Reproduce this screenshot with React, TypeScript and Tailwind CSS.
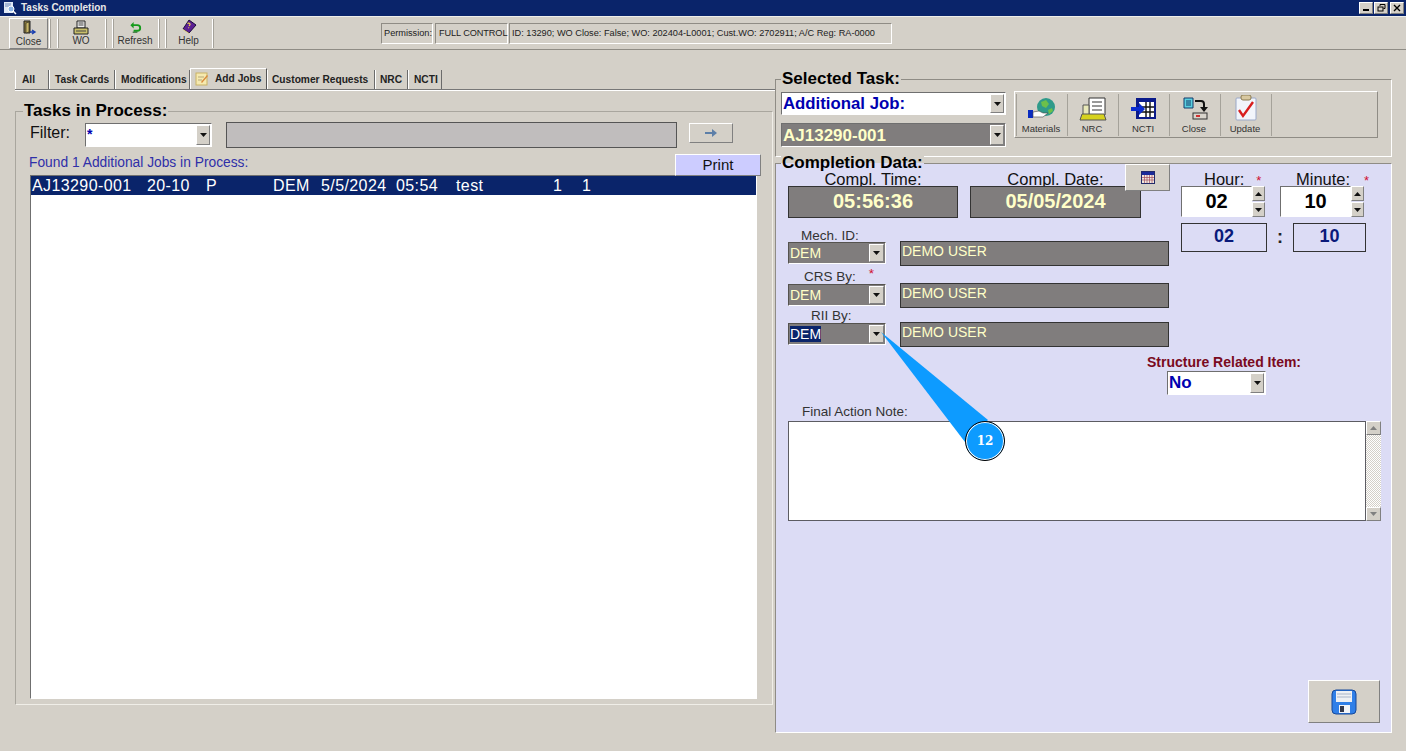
import type { ReactNode } from 'react'

const RAISED = 'border border-t-white border-l-white border-r-[#808080] border-b-[#808080]'
const SUNKEN = 'border border-t-[#6f6f6f] border-l-[#6f6f6f] border-r-white border-b-white'
const ETCHED = 'border border-t-[#8f8c85] border-l-[#8f8c85] border-r-white border-b-white'

function Arrow({ dim = false }: { dim?: boolean }) {
  return (
    <svg width="7" height="4" viewBox="0 0 7 4">
      <path d="M0 0h7L3.5 4z" fill={dim ? '#808080' : '#111'} />
    </svg>
  )
}

function DropButton({ className = 'w-[14px]' }: { className?: string }) {
  return (
    <div className={`${className} shrink-0 flex items-center justify-center bg-[#d4d0c8] ${RAISED}`}>
      <Arrow />
    </div>
  )
}

function SpinButtons() {
  return (
    <div className="w-[13px] h-[31px] flex flex-col gap-px">
      <div className={`h-[15px] flex items-center justify-center bg-[#d4d0c8] ${RAISED}`}>
        <svg width="7" height="4" viewBox="0 0 7 4">
          <path d="M0 4h7L3.5 0z" fill="#111" />
        </svg>
      </div>
      <div className={`h-[15px] flex items-center justify-center bg-[#d4d0c8] ${RAISED}`}>
        <Arrow />
      </div>
    </div>
  )
}

function ToolBtn({ label, icon, className = '' }: { label: string; icon: ReactNode; className?: string }) {
  return (
    <div className={`flex flex-col items-center shrink-0 text-[10px] leading-[12px] text-[#333] ${className}`}>
      <div className="h-[16px] flex items-center justify-center">{icon}</div>
      <span>{label}</span>
    </div>
  )
}

function Grip() {
  return <div className="w-[2px] h-[29px] shrink-0 border-l border-l-white border-r border-r-[#a5a29a]" />
}

function Tab({ label, className }: { label: string; className: string }) {
  return (
    <div className={`h-[19px] flex items-center shrink-0 border-r border-r-[#6b6b6b] border-l border-l-white text-[10.2px] font-bold text-[#222] whitespace-nowrap ${className}`}>
      {label}
    </div>
  )
}

function Mech({ value, selected = false, name }: { value: string; selected?: boolean; name: string }) {
  return (
    <div className="flex items-start">
      <div className="w-[98px] h-[22px] mt-px flex items-center justify-between pl-px pr-px bg-[#807d7d] border border-t-[#55534f] border-l-[#55534f] border-r-white border-b-white">
        <span className={`-mt-px text-[14px] leading-[16px] ${selected ? 'bg-[#0a246a] text-white' : 'text-[#ffffc8]'}`}>{value}</span>
        <DropButton className="w-[15px] h-[18px]" />
      </div>
      <div className="ml-[14px] w-[269px] h-[25px] border border-[#333] bg-[#807d7d] pl-px text-[14px] leading-[18px] text-[#ffffc8]">
        {name}
      </div>
    </div>
  )
}

const PanelLabel = 'text-[17px] leading-[18px] font-bold text-black bg-[#d4d0c8] w-fit px-px'

export default function App() {
  return (
    <div className="relative w-[1406px] h-[751px] overflow-hidden bg-[#d4d0c8] font-['Liberation_Sans',Arial,sans-serif]">
      {/* Title bar */}
      <div className="h-[16px] bg-[#0a246a] flex items-center pl-[3px] pr-[2px]">
        <svg width="14" height="14" viewBox="0 0 14 14">
          <rect x="1" y="1" width="9" height="11" fill="#dfe8f5" />
          <path d="M2 3h6M2 5h6" stroke="#6b86b8" />
          <circle cx="8" cy="8" r="3" fill="#8fb6e6" stroke="#fff" />
          <path d="M10 10l3 3" stroke="#fff" strokeWidth="1.5" />
        </svg>
        <span className="ml-[4px] text-[10px] leading-[16px] font-bold text-[#e8e8e8]">Tasks Completion</span>
        <div className="ml-auto flex">
          <div className={`w-[14px] h-[12px] bg-[#d4d0c8] flex items-end justify-center pb-[2px] ${RAISED}`}>
            <div className="w-[6px] h-[2px] bg-black" />
          </div>
          <div className={`ml-px w-[14px] h-[12px] bg-[#d4d0c8] flex items-center justify-center ${RAISED}`}>
            <svg width="9" height="8" viewBox="0 0 9 8" fill="none" stroke="#000">
              <path d="M3 2V.5h5v4H6.5" />
              <rect x="1" y="3" width="5" height="4" />
            </svg>
          </div>
          <div className={`ml-[2px] w-[14px] h-[12px] bg-[#d4d0c8] flex items-center justify-center ${RAISED}`}>
            <svg width="8" height="8" viewBox="0 0 8 8" stroke="#000" strokeWidth="1.4">
              <path d="M1 1l6 6M7 1L1 7" />
            </svg>
          </div>
        </div>
      </div>
      <div className="h-px bg-[#eeeeea]" />

      {/* Toolbar */}
      <div className="h-[33px] flex items-center border-b border-b-[#8f8c85]">
        <div className={`ml-[9px] w-[39px] h-[31px] pt-px shrink-0 ${RAISED}`}>
          <ToolBtn
            label="Close"
            icon={
              <svg width="16" height="16" viewBox="0 0 16 16">
                <path d="M3 1h6v12H3z" fill="#8a7a3c" stroke="#222" />
                <path d="M5 3l3-1v10l-3 1z" fill="#c9b765" stroke="#222" strokeWidth=".6" />
                <path d="M9 12h4m-2-2l3 2-3 2" stroke="#1a3fb0" strokeWidth="1.4" fill="none" />
              </svg>
            }
          />
        </div>
        <div className="ml-px">
          <Grip />
        </div>
        <div className="ml-[6px]">
          <Grip />
        </div>
        <ToolBtn
          label="WO"
          className="w-[46px] -ml-px"
          icon={
            <svg width="16" height="15" viewBox="0 0 16 15">
              <path d="M4 1h8v7H4z" fill="#eee" stroke="#222" />
              <path d="M5.5 3h5M5.5 5h5" stroke="#444" />
              <path d="M1 8h14v6H1z" fill="#c9bf6a" stroke="#222" />
              <path d="M3 11h10" stroke="#444" />
            </svg>
          }
        />
        <div className="ml-px">
          <Grip />
        </div>
        <div className="ml-[5px]">
          <Grip />
        </div>
        <ToolBtn
          label="Refresh"
          className="w-[44px] -ml-px"
          icon={
            <svg width="15" height="15" viewBox="0 0 16 16" fill="none">
              <path d="M4 5.5h6a3 3 0 010 6H6" stroke="#159a1c" strokeWidth="2" />
              <path d="M6 2L2.5 5.5 6 9z" fill="#159a1c" />
              <path d="M5 13h5" stroke="#0a5a10" />
            </svg>
          }
        />
        <div className="ml-px">
          <Grip />
        </div>
        <div className="ml-[5px]">
          <Grip />
        </div>
        <ToolBtn
          label="Help"
          className="w-[45px] -ml-px"
          icon={
            <svg width="16" height="16" viewBox="0 0 16 16">
              <path d="M8 1l7 5-7 8-6-4z" fill="#5b1f94" stroke="#1b0a3c" />
              <path d="M2 10l6 4 0 1-6-4z" fill="#e8d98a" />
              <path d="M6.5 4.5c1-1 3 0 2.5 1.2L8 7M7.4 8.6l.6.4" stroke="#f2d94a" strokeWidth="1.2" fill="none" />
            </svg>
          }
        />
        <div className="ml-px">
          <Grip />
        </div>
        <div className="ml-[167px] mt-px flex h-[21px] text-[9.2px] leading-[19px] text-[#222] whitespace-nowrap">
          <div className={`w-[52px] pl-[2px] ${ETCHED}`}>Permission:</div>
          <div className={`ml-[2px] w-[73px] pl-[3px] tracking-[-0.1px] ${ETCHED}`}>FULL CONTROL</div>
          <div className={`ml-px w-[383px] pl-[2px] ${ETCHED}`}>
            ID: 13290; WO Close: False; WO: 202404-L0001; Cust.WO: 2702911; A/C Reg: RA-0000
          </div>
        </div>
      </div>

      <div className="flex items-start">
        {/* Left column */}
        <div className="w-[775px] shrink-0 pl-[15px]">
          <div className="mt-[19px] h-[21px] flex items-end border-b border-b-[#777] shadow-[0_1px_0_#fff]">
            <Tab label="All" className="w-[34px] pl-[6px] pt-px" />
            <Tab label="Task Cards" className="w-[66px] pl-[5px] pt-px" />
            <Tab label="Modifications" className="w-[75px] pl-[5px] pt-px" />
            <div className="h-[21px] w-[77px] flex items-center shrink-0 bg-[#d4d0c8] border-r border-r-[#555] border-t border-t-white border-l border-l-white text-[10.2px] font-bold text-[#222] whitespace-nowrap">
              <svg className="ml-[4px] mr-[6px]" width="14" height="14" viewBox="0 0 14 14">
                <rect x="1" y="1" width="11" height="12" fill="#f6eab0" stroke="#c9b265" />
                <path d="M3 5h6M3 8h4" stroke="#b5a77a" />
                <path d="M6 10l6-7 1 1-6 7z" fill="#d98a3c" />
              </svg>
              Add Jobs
            </div>
            <Tab label="Customer Requests" className="w-[108px] pl-[4px] pt-px" />
            <Tab label="NRC" className="w-[33px] pl-[4px] pt-px" />
            <Tab label="NCTI" className="w-[34px] pl-[5px] pt-px" />
          </div>

          <div className="mt-[21px] w-[758px] h-[594px] border border-t-[#a9a69e] border-l-[#a9a69e] border-r-[#f0eee8] border-b-[#f0eee8]">
            <div className={`-mt-[10px] ml-[7px] ${PanelLabel}`}>Tasks in Process:</div>
            <div className="mt-[3px] flex items-start">
              <span className="ml-[14px] w-[55px] text-[16px] leading-[20px] text-[#111]">Filter:</span>
              <div className={`w-[127px] h-[24px] bg-white flex justify-between p-px ${SUNKEN}`}>
                <span className="text-[14px] leading-[18px] font-bold text-[#0000b0]">*</span>
                <DropButton />
              </div>
              <div className="ml-[14px] -mt-px w-[451px] h-[26px] border border-[#555] bg-[#c0bdbd]" />
              <div className={`ml-[12px] w-[44px] h-[20px] flex items-center justify-center bg-[#d4d0c8] ${RAISED}`}>
                <svg width="14" height="8" viewBox="0 0 14 8">
                  <path d="M1 3h7V0l5 4-5 4V5H1z" fill="#5d7fa8" />
                </svg>
              </div>
            </div>
            <div className="mt-[6px] h-[22px] flex items-start justify-between">
              <span className="ml-[13px] mt-px text-[13.8px] leading-[16px] text-[#2f2fa8]">Found 1 Additional Jobs in Process:</span>
              <div className="mr-[11px] w-[86px] h-[22px] bg-[#ccccff] border-r border-b border-r-[#808080] border-b-[#808080] border-t border-t-white border-l border-l-white text-center text-[15px] leading-[20px] text-[#111]">
                Print
              </div>
            </div>
            <div className={`-mt-px ml-[14px] w-[727px] h-[524px] bg-white ${SUNKEN}`}>
              <div className="h-[19px] bg-[#0a246a] flex text-[16px] leading-[19px] tracking-[0.4px] text-white whitespace-pre">
                <span className="ml-px w-[115px]">AJ13290-001</span>
                <span className="w-[59px]">20-10</span>
                <span className="w-[67px]">P</span>
                <span className="w-[48px]">DEM</span>
                <span className="w-[75px]">5/5/2024</span>
                <span className="w-[60px]">05:54</span>
                <span className="w-[97px]">test</span>
                <span className="w-[29px]">1</span>
                <span>1</span>
              </div>
            </div>
          </div>
        </div>

        {/* Right column */}
        <div className="w-[617px] shrink-0">
          <div className={`mt-[29px] h-[78px] ${ETCHED}`}>
            <div className={`-mt-[10px] ml-[5px] ${PanelLabel}`}>Selected Task:</div>
            <div className="mt-[3px] ml-[5px] flex items-start">
              <div className="w-[225px] flex flex-col gap-[8px] pt-px">
                <div className={`h-[23px] bg-white flex justify-between p-px ${SUNKEN}`}>
                  <span className="text-[16.8px] leading-[20px] font-bold text-[#0000b0]">Additional Job:</span>
                  <DropButton />
                </div>
                <div className={`h-[24px] bg-[#807d7d] flex justify-between p-px ${SUNKEN}`}>
                  <span className="text-[17px] leading-[21px] font-bold text-[#ffffc8]">AJ13290-001</span>
                  <DropButton />
                </div>
              </div>
              <div className="ml-[8px] w-[364px] h-[47px] flex items-center border border-t-white border-l-white border-r-[#8f8c85] border-b-[#8f8c85]">
                <div className="ml-px h-[42px] border-l border-l-[#a5a29a]" />
                {[
                  {
                    label: 'Materials',
                    icon: (
                      <svg width="30" height="24" viewBox="0 0 30 24">
                        <circle cx="19" cy="10" r="9" fill="#2f9a8a" />
                        <path d="M14 5l5-2 3 4-3 4-4-2zM21 13l4-2 1 3-4 3z" fill="#6cc04a" />
                        <path d="M1 13h5v8H1z" fill="#0a2bc0" />
                        <path d="M6 15l6-1 4 2h5l-5 4H6z" fill="#ffffff" stroke="#444" strokeWidth=".6" />
                      </svg>
                    ),
                  },
                  {
                    label: 'NRC',
                    icon: (
                      <svg width="28" height="24" viewBox="0 0 28 24">
                        <path d="M10 1h16v17H10z" fill="#fff" stroke="#333" />
                        <path d="M13 5h10M13 9h10M13 13h10" stroke="#333" />
                        <path d="M4 8h6v11H4z" fill="#e8e8b8" stroke="#555" />
                        <path d="M3 17h22l2 6H1z" fill="#d6d21e" stroke="#555" />
                      </svg>
                    ),
                  },
                  {
                    label: 'NCTI',
                    icon: (
                      <svg width="26" height="24" viewBox="0 0 26 24">
                        <rect x="5" y="1" width="20" height="21" fill="#0a1a8a" />
                        <rect x="8" y="5" width="15" height="15" fill="#fff" />
                        <path d="M15 5v15M19 5v15M8 10h15M8 15h15" stroke="#111" strokeWidth="1.4" />
                        <path d="M0 10h8V6l6 6-6 6v-4H0z" fill="#0a2bd0" />
                      </svg>
                    ),
                  },
                  {
                    label: 'Close',
                    icon: (
                      <svg width="26" height="24" viewBox="0 0 26 24">
                        <path d="M2 1h9v10H2z" fill="#5ad0e0" stroke="#123a6a" />
                        <path d="M4 4h5M4 6h5M4 8h5" stroke="#123a6a" />
                        <path d="M13 4h6a3 3 0 013 3v3" stroke="#111" strokeWidth="2" fill="none" />
                        <path d="M18 10h8l-4 5z" fill="#111" />
                        <rect x="11" y="16" width="14" height="6" fill="#d8d4cc" stroke="#333" />
                        <rect x="14" y="18" width="4" height="2" fill="#d03030" />
                      </svg>
                    ),
                  },
                  {
                    label: 'Update',
                    icon: (
                      <svg width="24" height="26" viewBox="0 0 24 26">
                        <rect x="2" y="3" width="20" height="22" rx="1" fill="#f2f5fb" stroke="#9aa8c8" />
                        <rect x="7" y="0" width="10" height="5" rx="2" fill="#d8c8a0" stroke="#8a7a50" />
                        <path d="M5 15l4 6 10-14" stroke="#d81e1e" strokeWidth="2.4" fill="none" />
                      </svg>
                    ),
                  },
                ].map((b) => (
                  <div key={b.label} className="w-[51px] h-[42px] shrink-0 flex flex-col items-center justify-end border-r border-r-[#a5a29a] text-[9.5px] leading-[12px] text-[#333]">
                    {b.icon}
                    <span className="mt-[2px] mb-px -ml-[2px]">{b.label}</span>
                  </div>
                ))}
              </div>
            </div>
          </div>

          {/* Completion data */}
          <div className={`relative mt-[6px] w-[617px] h-[570px] bg-[#dcdcf5] ${ETCHED}`}>
            <div className="-mt-[10px] ml-[5px] w-fit h-[18px] px-px bg-[linear-gradient(#d4d0c8_50%,#dcdcf5_50%)] text-[17px] leading-[18px] font-bold text-black">
              Completion Data:
            </div>

            <div className="flex items-start">
              <div className="ml-[12px] w-[381px]">
                <div className="flex">
                  <div className="w-[170px]">
                    <div className="h-[14px] text-center text-[16.5px] leading-[15px] text-[#111]">Compl. Time:</div>
                    <div className="relative h-[32px] border border-[#333] bg-[#807d7d] text-center text-[20px] leading-[28px] font-bold text-[#ffffc8]">05:56:36</div>
                  </div>
                  <div className="ml-[12px] w-[171px]">
                    <div className="h-[14px] text-center text-[16.5px] leading-[15px] text-[#111]">Compl. Date:</div>
                    <div className="relative h-[32px] border border-[#333] bg-[#807d7d] text-center text-[20px] leading-[28px] font-bold text-[#ffffc8]">05/05/2024</div>
                  </div>
                </div>
                <div className="mt-[11px] ml-[13px] h-[12px] text-[13.5px] leading-[14px] text-[#333]">Mech. ID:</div>
                <Mech value="DEM" name="DEMO USER" />
                <div className="mt-[4px] ml-[16px] h-[13px] flex text-[13.5px] leading-[14px] text-[#333]">
                  CRS By:
                  <span className="ml-[13px] -mt-[3px] text-[#d01030]">*</span>
                </div>
                <Mech value="DEM" name="DEMO USER" />
                <div className="mt-px ml-[23px] h-[13px] text-[13.5px] leading-[14px] text-[#333]">RII By:</div>
                <Mech value="DEM" selected name="DEMO USER" />
              </div>

              <div className="ml-[12px]">
                <div className="flex">
                  <div className="w-[85px]">
                    <div className="h-[14px] pl-[23px] text-[16.5px] leading-[15px] text-[#111] whitespace-nowrap">
                      Hour:<span className="ml-[12px] text-[13px] text-[#d01030]">*</span>
                    </div>
                    <div className="relative flex">
                      <div className={`w-[71px] h-[31px] bg-white text-center text-[20px] leading-[28px] font-bold text-black ${SUNKEN}`}>02</div>
                      <SpinButtons />
                    </div>
                  </div>
                  <div className="ml-[14px] w-[86px]">
                    <div className="h-[14px] pl-[16px] text-[16.5px] leading-[15px] text-[#111] whitespace-nowrap">
                      Minute:<span className="ml-[14px] text-[13px] text-[#d01030]">*</span>
                    </div>
                    <div className="relative flex">
                      <div className={`w-[71px] h-[31px] bg-white text-center text-[20px] leading-[28px] font-bold text-black ${SUNKEN}`}>10</div>
                      <SpinButtons />
                    </div>
                  </div>
                </div>
                <div className="mt-[6px] flex items-center">
                  <div className="w-[86px] h-[29px] border border-[#333] text-center text-[18px] leading-[25px] font-bold text-[#0a1a7a]">02</div>
                  <span className="w-[26px] text-center text-[18px] font-bold text-[#222]">:</span>
                  <div className="w-[73px] h-[29px] border border-[#333] text-center text-[18px] leading-[25px] font-bold text-[#0a1a7a]">10</div>
                </div>
              </div>
            </div>

            <div className="mt-[8px] ml-[371px] h-[15px] text-[14px] leading-[15px] font-bold text-[#7a0a20]">Structure Related Item:</div>
            <div className={`mt-px ml-[391px] w-[99px] h-[24px] bg-white flex justify-between p-px ${SUNKEN}`}>
              <span className="text-[17px] leading-[20px] font-bold text-[#0000b0]">No</span>
              <DropButton />
            </div>
            <div className="mt-[9px] ml-[26px] h-[17px] text-[13.5px] leading-[16px] text-[#333]">Final Action Note:</div>
            <div className="ml-[12px] flex">
              <div className="w-[578px] h-[100px] bg-white border border-[#5c5c62]" />
              <div className="w-[15px] h-[100px] flex flex-col justify-between bg-[repeating-conic-gradient(#d4d0c8_0_25%,#ffffff_0_50%)] bg-[length:2px_2px]">
                <div className={`h-[14px] flex items-center justify-center bg-[#d4d0c8] ${RAISED}`}>
                  <svg width="7" height="4" viewBox="0 0 7 4">
                    <path d="M0 4h7L3.5 0z" fill="#808080" />
                  </svg>
                </div>
                <div className={`h-[14px] flex items-center justify-center bg-[#d4d0c8] ${RAISED}`}>
                  <Arrow dim />
                </div>
              </div>
            </div>
            <div className={`mt-[159px] ml-[532px] w-[72px] h-[43px] flex items-center justify-center bg-[#d4d0c8] ${RAISED}`}>
              <svg width="26" height="26" viewBox="0 0 26 26">
                <rect x="1" y="1" width="24" height="24" rx="4" fill="#2f7fe8" stroke="#16489a" />
                <rect x="5" y="2" width="16" height="11" fill="#eef0f4" />
                <path d="M6 5h14M6 8h14" stroke="#a8b4c8" />
                <rect x="8" y="16" width="11" height="8" fill="#f2f4f8" />
                <rect x="9" y="17" width="4" height="6" fill="#33384a" />
              </svg>
            </div>

            {/* Calendar button overlaps the date box */}
            <div className={`absolute left-[349px] top-0 w-[45px] h-[27px] flex items-center justify-center bg-[#d4d0c8] ${RAISED}`}>
              <svg width="14" height="13" viewBox="0 0 14 13">
                <rect x=".5" y=".5" width="13" height="12" fill="#f0e8e0" stroke="#222a6a" />
                <rect x="1" y="1" width="12" height="3" fill="#1a2a9a" />
                <path d="M3.5 4v8M6 4v8M8.5 4v8M11 4v8M1 6.5h12M1 9h12" stroke="#a04a5a" strokeWidth=".7" />
              </svg>
            </div>
          </div>
        </div>
      </div>

      {/* Callout */}
      <svg className="absolute left-0 top-0 pointer-events-none" width="1406" height="751">
        <polygon points="881,332 988,420 965,442" fill="#0d9bff" />
      </svg>
      <div className="absolute left-[965px] top-[421px] w-[40px] h-[40px] rounded-full bg-[#0d9bff] border border-black shadow-[inset_0_0_0_1px_#fff] flex items-center justify-center text-[12px] font-bold text-white font-['DejaVu_Serif',serif]">
        12
      </div>
    </div>
  )
}
